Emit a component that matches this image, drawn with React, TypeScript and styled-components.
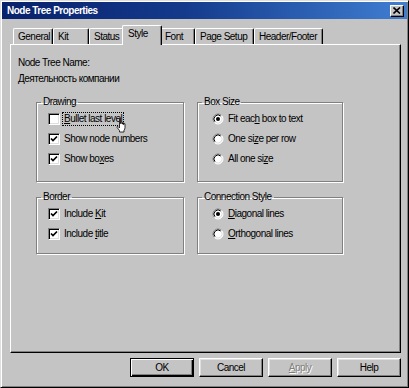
import React from 'react';
import styled, { createGlobalStyle, css } from 'styled-components';

const FACE = '#c4c4c4';
const SHADOW = '#808080';
const HILITE = '#ffffff';
const LIGHT = '#dfdfdf';

const GlobalStyle = createGlobalStyle`
  html, body { margin: 0; padding: 0; background: ${FACE}; }
  body {
    font-family: "Liberation Sans", Arial, sans-serif;
    font-size: 10px;
    letter-spacing: -0.5px;
    color: #000;
  }
`;

const Window = styled.div`
  width: 409px;
  height: 388px;
  box-sizing: border-box;
  background: ${FACE};
  border: 1px solid;
  border-color: ${LIGHT} #000 #000 ${LIGHT};
  box-shadow: inset 1px 1px 0 ${HILITE}, inset -1px -1px 0 ${SHADOW};
  padding: 1px;
  display: flex;
  flex-direction: column;
`;

const TitleBar = styled.div`
  height: 17px;
  flex: none;
  display: flex;
  align-items: center;
  justify-content: space-between;
  padding: 0 3px 0 5px;
  background: linear-gradient(90deg, #08216b 0%, #143a8c 45%, #3f7ed2 100%);
  color: #fff;
  font-weight: bold;
  font-size: 10px;
  letter-spacing: -0.5px;
`;

const CloseButton = styled.div`
  width: 14px;
  height: 12px;
  box-sizing: border-box;
  background: ${FACE};
  border: 1px solid;
  border-color: ${HILITE} #000 #000 ${HILITE};
  box-shadow: inset -1px -1px 0 ${SHADOW};
  display: flex;
  align-items: center;
  justify-content: center;
`;

const Body = styled.div`
  flex: 1;
  display: flex;
  flex-direction: column;
  padding: 6px 6px 0 8px;
`;

const TabStrip = styled.div`
  display: flex;
  align-items: flex-end;
  height: 19px;
  padding-left: 3px;
`;

const Tab = styled.div<{ $w: number; $active?: boolean }>`
  box-sizing: border-box;
  width: ${(p) => p.$w}px;
  height: 16px;
  line-height: 15px;
  padding-left: 4px;
  white-space: nowrap;
  background: ${FACE};
  border-top: 1px solid ${HILITE};
  border-left: 1px solid ${HILITE};
  border-right: 1px solid #000;
  border-radius: 2px 2px 0 0;
  box-shadow: inset -1px 0 0 ${SHADOW};
  ${(p) =>
    p.$active &&
    css`
      position: relative;
      z-index: 1;
      width: ${p.$w + 4}px;
      height: 20px;
      line-height: 16px;
      margin: 0 -2px -1px;
      padding-left: 5px;
    `}
`;

const Panel = styled.div`
  flex: none;
  box-sizing: border-box;
  height: 309px;
  border: 1px solid;
  border-color: ${HILITE} #000 #000 ${HILITE};
  box-shadow: inset -1px -1px 0 ${SHADOW};
  padding: 11px 0 0 7px;
`;

const TextLine = styled.div<{ $gap?: number }>`
  line-height: 14px;
  margin-top: ${(p) => p.$gap ?? 0}px;
`;

const GroupGrid = styled.div`
  display: grid;
  grid-template-columns: 148px 146px;
  grid-template-rows: 86px 63px;
  column-gap: 13px;
  row-gap: 9px;
  margin: 10px 0 0 18px;
`;

const GroupBox = styled.fieldset`
  margin: 0;
  min-width: 0;
  padding: 0 8px 0 11px;
  border: 1px solid ${SHADOW};
  box-shadow: inset 1px 1px 0 ${HILITE}, 1px 1px 0 ${HILITE};
`;

const Legend = styled.legend`
  padding: 0 2px;
  margin-left: -7px;
  line-height: 12px;
`;

const OptionList = styled.div<{ $indent?: number }>`
  display: flex;
  flex-direction: column;
  margin-top: 1px;
  padding-left: ${(p) => p.$indent ?? 0}px;
`;

const Option = styled.div`
  position: relative;
  display: flex;
  align-items: center;
  gap: 3px;
  height: 20px;
  white-space: nowrap;
`;

const CheckBox = styled.span`
  flex: none;
  box-sizing: border-box;
  width: 12px;
  height: 12px;
  background: #fff;
  border: 1px solid;
  border-color: ${SHADOW} ${HILITE} ${HILITE} ${SHADOW};
  box-shadow: inset 1px 1px 0 #000, inset -1px -1px 0 ${LIGHT};
  display: flex;
  align-items: center;
  justify-content: center;
`;

const RadioBox = styled.span`
  flex: none;
  width: 12px;
  height: 12px;
  display: flex;
`;

const Label = styled.span<{ $focus?: boolean }>`
  padding: 0 1px;
  line-height: 12px;
  ${(p) =>
    p.$focus &&
    css`
      outline: 1px dotted #000;
      outline-offset: 0;
    `}
`;

const Key = styled.span`
  text-decoration: underline;
`;

const Cursor = styled.svg`
  position: absolute;
  left: 68px;
  top: 8px;
`;

const ButtonRow = styled.div`
  display: flex;
  justify-content: flex-end;
  gap: 5px;
  margin-top: 5px;
`;

const Button = styled.div<{ $default?: boolean; $disabled?: boolean }>`
  box-sizing: border-box;
  width: 64px;
  height: 19px;
  display: flex;
  align-items: center;
  justify-content: center;
  background: ${FACE};
  border: 1px solid;
  border-color: ${HILITE} #000 #000 ${HILITE};
  box-shadow: inset -1px -1px 0 ${SHADOW}, inset 1px 1px 0 ${LIGHT};
  ${(p) =>
    p.$default &&
    css`
      border-color: #000;
      box-shadow: inset 1px 1px 0 ${HILITE}, inset -1px -1px 0 #000,
        inset -2px -2px 0 ${SHADOW};
    `}
  ${(p) =>
    p.$disabled &&
    css`
      color: ${SHADOW};
      text-shadow: 1px 1px 0 ${HILITE};
    `}
`;

const Check = () => (
  <svg width="8" height="8" viewBox="0 0 8 8">
    <path d="M1 3.5 L3 5.5 L7 1.5" fill="none" stroke="#000" strokeWidth="1.7" />
  </svg>
);

const Radio = ({ on }: { on?: boolean }) => (
  <RadioBox>
    <svg width="12" height="12" viewBox="0 0 12 12">
      <circle cx="6" cy="6" r="5" fill="#fff" />
      <path d="M2.46 9.54 A5 5 0 0 1 9.54 2.46" fill="none" stroke="#808080" strokeWidth="1" />
      <path d="M3.17 8.83 A4 4 0 0 1 8.83 3.17" fill="none" stroke="#000" strokeWidth="1" />
      <path d="M9.54 2.46 A5 5 0 0 1 2.46 9.54" fill="none" stroke="#ffffff" strokeWidth="1" />
      <path d="M8.83 3.17 A4 4 0 0 1 3.17 8.83" fill="none" stroke="#dfdfdf" strokeWidth="1" />
      {on && <circle cx="6" cy="6" r="2" fill="#000" />}
    </svg>
  </RadioBox>
);

const CheckOption = ({ checked, children, focus }: { checked?: boolean; children: React.ReactNode; focus?: boolean }) => (
  <Option>
    <CheckBox>{checked && <Check />}</CheckBox>
    <Label $focus={focus}>{children}</Label>
    {focus && (
      <Cursor width="11" height="16" viewBox="0 0 11 16">
        <path
          d="M3.5 1.5 C3.5 0.6 4.5 0.6 4.5 1.5 L4.5 6.5 L5 6.5 L5 5.5 C5 4.8 6 4.8 6 5.5 L6 7 L6.5 7 L6.5 6 C6.5 5.3 7.5 5.3 7.5 6 L7.5 7.5 L8 7.5 L8 7 C8 6.3 9 6.3 9 7 L9 10.5 C9 11.8 8.6 12.6 8 13.2 L8 15 L3.5 15 L3.5 13.5 L1.2 10.6 C0.6 9.8 1.3 9 2 9.5 L3.5 11 Z"
          fill="#fff"
          stroke="#000"
          strokeWidth="0.8"
        />
      </Cursor>
    )}
  </Option>
);

const RadioOption = ({ on, children }: { on?: boolean; children: React.ReactNode }) => (
  <Option>
    <Radio on={on} />
    <Label>{children}</Label>
  </Option>
);

const tabs: { label: string; w: number; active?: boolean }[] = [
  { label: 'General', w: 40 },
  { label: 'Kit', w: 36 },
  { label: 'Status', w: 35 },
  { label: 'Style', w: 36, active: true },
  { label: 'Font', w: 35 },
  { label: 'Page Setup', w: 59 },
  { label: 'Header/Footer', w: 69 },
];

export default function App() {
  return (
    <>
      <GlobalStyle />
      <Window>
        <TitleBar>
          <span>Node Tree Properties</span>
          <CloseButton>
            <svg width="8" height="7" viewBox="0 0 8 7">
              <path d="M0.5 0.5 L7 6.5 M7 0.5 L0.5 6.5" stroke="#000" strokeWidth="1.6" />
            </svg>
          </CloseButton>
        </TitleBar>
        <Body>
          <TabStrip>
            {tabs.map((t) => (
              <Tab key={t.label} $w={t.w} $active={t.active}>
                {t.label}
              </Tab>
            ))}
          </TabStrip>
          <Panel>
            <TextLine>Node Tree Name:</TextLine>
            <TextLine $gap={2}>Деятельность компании</TextLine>
            <GroupGrid>
              <GroupBox>
                <Legend>Drawing</Legend>
                <OptionList>
                  <CheckOption focus>
                    <Key>B</Key>ullet last level
                  </CheckOption>
                  <CheckOption checked>Show node numbers</CheckOption>
                  <CheckOption checked>
                    Show bo<Key>x</Key>es
                  </CheckOption>
                </OptionList>
              </GroupBox>
              <GroupBox>
                <Legend>Box Size</Legend>
                <OptionList $indent={3}>
                  <RadioOption on>
                    Fit eac<Key>h</Key> box to text
                  </RadioOption>
                  <RadioOption>
                    One si<Key>z</Key>e per row
                  </RadioOption>
                  <RadioOption>
                    All one si<Key>z</Key>e
                  </RadioOption>
                </OptionList>
              </GroupBox>
              <GroupBox>
                <Legend>Border</Legend>
                <OptionList>
                  <CheckOption checked>
                    Include <Key>K</Key>it
                  </CheckOption>
                  <CheckOption checked>
                    Include <Key>t</Key>itle
                  </CheckOption>
                </OptionList>
              </GroupBox>
              <GroupBox>
                <Legend>Connection Style</Legend>
                <OptionList $indent={3}>
                  <RadioOption on>
                    <Key>D</Key>iagonal lines
                  </RadioOption>
                  <RadioOption>
                    <Key>O</Key>rthogonal lines
                  </RadioOption>
                </OptionList>
              </GroupBox>
            </GroupGrid>
          </Panel>
          <ButtonRow>
            <Button $default>OK</Button>
            <Button>Cancel</Button>
            <Button $disabled>
              <Key>A</Key>pply
            </Button>
            <Button>Help</Button>
          </ButtonRow>
        </Body>
      </Window>
    </>
  );
}
